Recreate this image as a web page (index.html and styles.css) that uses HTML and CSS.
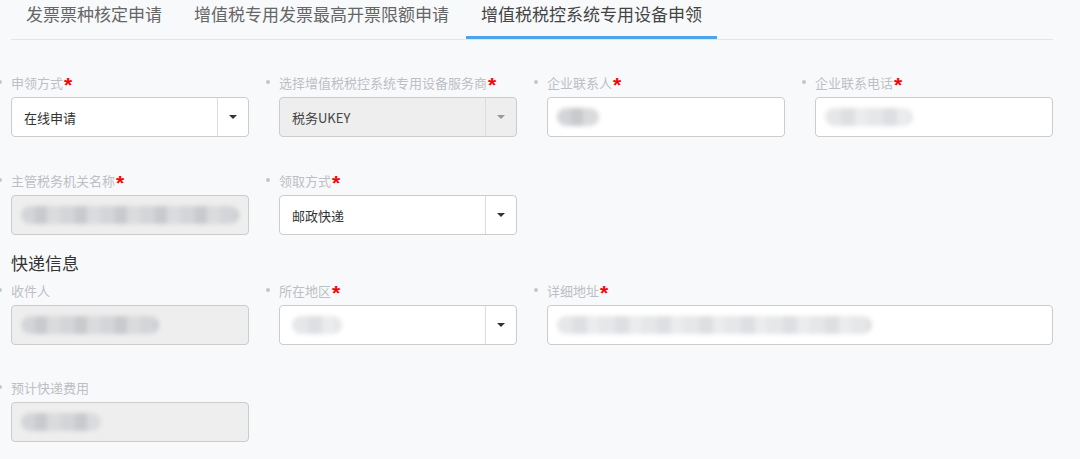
FILE: index.html
```html
<!DOCTYPE html>
<html lang="zh-CN">
<head>
    <meta charset="UTF-8">
    <title>增值税税控系统专用设备申领</title>
    <link rel="stylesheet" href="styles.css">
</head>
<body>
    <div class="tabs">
        <div class="tab">发票票种核定申请</div>
        <div class="tab">增值税专用发票最高开票限额申请</div>
        <div class="tab active">增值税税控系统专用设备申领</div>
    </div>

    <div class="form">
        <div class="grid">
            <div class="field">
                <div class="label"><i class="dot"></i>申领方式<b class="req">*</b></div>
                <div class="select">
                    <span class="value">在线申请</span>
                    <span class="arrow"></span>
                </div>
            </div>
            <div class="field">
                <div class="label"><i class="dot"></i>选择增值税税控系统专用设备服务商<b class="req">*</b></div>
                <div class="select disabled">
                    <span class="value">税务UKEY</span>
                    <span class="arrow"></span>
                </div>
            </div>
            <div class="field">
                <div class="label"><i class="dot"></i>企业联系人<b class="req">*</b></div>
                <div class="input">
                    <span class="blur dark" style="width: 42px"></span>
                </div>
            </div>
            <div class="field">
                <div class="label"><i class="dot"></i>企业联系电话<b class="req">*</b></div>
                <div class="input">
                    <span class="blur light" style="width: 88px"></span>
                </div>
            </div>

            <div class="field">
                <div class="label"><i class="dot"></i>主管税务机关名称<b class="req">*</b></div>
                <div class="input disabled">
                    <span class="blur dark" style="width: 222px"></span>
                </div>
            </div>
            <div class="field">
                <div class="label"><i class="dot"></i>领取方式<b class="req">*</b></div>
                <div class="select">
                    <span class="value">邮政快递</span>
                    <span class="arrow"></span>
                </div>
            </div>
        </div>

        <h3 class="section">快递信息</h3>

        <div class="grid tight">
            <div class="field">
                <div class="label"><i class="dot"></i>收件人</div>
                <div class="input disabled">
                    <span class="blur dark" style="width: 138px"></span>
                </div>
            </div>
            <div class="field">
                <div class="label"><i class="dot"></i>所在地区<b class="req">*</b></div>
                <div class="select">
                    <span class="value"><span class="blur light" style="width: 50px"></span></span>
                    <span class="arrow"></span>
                </div>
            </div>
            <div class="field wide">
                <div class="label"><i class="dot"></i>详细地址<b class="req">*</b></div>
                <div class="input">
                    <span class="blur light" style="width: 315px"></span>
                </div>
            </div>

            <div class="field">
                <div class="label"><i class="dot"></i>预计快递费用</div>
                <div class="input disabled">
                    <span class="blur dark" style="width: 80px"></span>
                </div>
            </div>
        </div>
    </div>
</body>
</html>
```

FILE: styles.css
```css
body {
    margin: 0;
    background: #f8f9fb;
    font-family: "Noto Sans CJK SC", "Noto Sans", sans-serif;
    font-size: 13px;
    color: #333;
}
.tabs {
    display: flex;
    width: 1042px;
    margin-left: 11px;
    border-bottom: 1px solid #e3e5e9;
}
.tab {
    padding: 0 15px;
    margin-right: 2px;
    height: 39px;
    line-height: 28px;
    font-size: 17px;
    color: #666;
    box-sizing: border-box;
}
.tab.active {
    color: #444;
    border-bottom: 3px solid #4da4ee;
}
.form {
    padding: 32px 0 0 11px;
}
.grid {
    display: grid;
    grid-template-columns: repeat(4, 238px);
    column-gap: 30px;
    row-gap: 33px;
}
.grid.tight {
    row-gap: 32px;
}
.field.wide {
    grid-column: span 2;
}
.label {
    display: flex;
    align-items: center;
    height: 20px;
    margin-bottom: 5px;
    color: #bcbfc4;
    white-space: nowrap;
}
.dot {
    width: 4px;
    height: 4px;
    border-radius: 50%;
    background: #c4c6ca;
    margin-left: -13px;
    margin-right: 9px;
}
.req {
    color: #f00;
    font-family: "Liberation Sans", sans-serif;
    font-size: 21px;
    line-height: 20px;
    margin-left: 1px;
    position: relative;
    top: 3px;
}
.input,
.select {
    display: flex;
    align-items: center;
    height: 40px;
    box-sizing: border-box;
    border: 1px solid #ccc;
    border-radius: 4px;
    background: #fff;
}
.input {
    padding: 0 9px;
}
.disabled {
    background: #eee;
}
.select .value {
    flex: 1;
    display: flex;
    align-items: center;
    height: 100%;
    padding-left: 12px;
    border-right: 1px solid #ddd;
}
.select .arrow {
    width: 30px;
    height: 100%;
    display: flex;
    align-items: center;
    justify-content: center;
}
.select .arrow::after {
    content: "";
    border-left: 4px solid transparent;
    border-right: 4px solid transparent;
    border-top: 4px solid #333;
}
.select.disabled .arrow::after {
    border-top-color: #999;
}
.select.disabled .value {
    color: #444;
}
.blur {
    display: inline-block;
    height: 18px;
    border-radius: 9px;
    filter: blur(2px);
}
.blur.dark {
    background: repeating-linear-gradient(90deg, #d4d5d8 0 14px, #c9cacd 14px 26px, #dadbdd 26px 40px);
}
.blur.light {
    background: repeating-linear-gradient(90deg, #e6e7e9 0 16px, #dedfe2 16px 30px, #ebeced 30px 42px);
}
.section {
    margin: 18px 0 7px;
    height: 20px;
    line-height: 20px;
    font-size: 17px;
    font-weight: normal;
    color: #333;
}
```
